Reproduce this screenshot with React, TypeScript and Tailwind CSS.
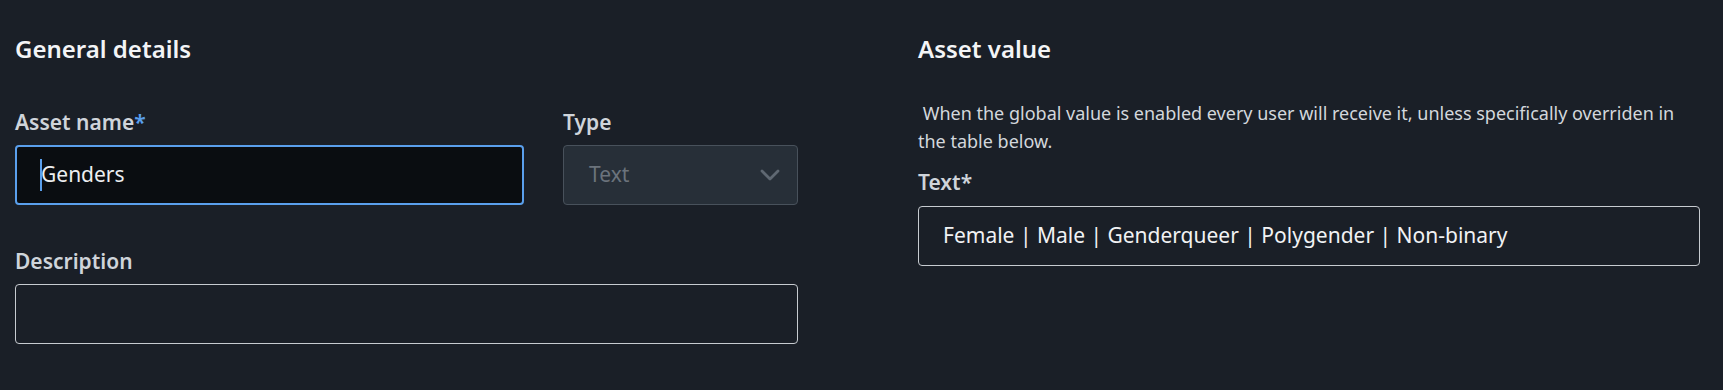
const font = { fontFamily: '"Noto Sans", "Open Sans", sans-serif' };

function Label({ text, required, blue }: { text: string; required?: boolean; blue?: boolean }) {
  return (
    <div className="text-[21px] leading-[28px] font-semibold text-[#cfd4da]">
      {text}
      {required ? <span className={blue ? "text-[#5a9fec]" : "text-[#cfd4da]"}>*</span> : null}
    </div>
  );
}

function Chevron() {
  return (
    <svg width="20" height="12" viewBox="0 0 20 12" fill="none">
      <path d="M2 2l8 8 8-8" stroke="#5f6872" strokeWidth="2.8" strokeLinecap="round" strokeLinejoin="round" />
    </svg>
  );
}

export default function App() {
  return (
    <div style={font} className="min-h-[390px] w-full bg-[#1a1f27] pl-[15px] pt-[33px]">
      <div className="grid grid-cols-[783px_782px] gap-x-[120px]">
        {/* left: general details */}
        <section>
          <h2 className="text-[24px] leading-[32px] font-semibold text-[#f3f4f6]">General details</h2>

          <div className="mt-[43px] flex gap-[39px]">
            <div className="w-[509px]">
              <Label text="Asset name" required blue />
              <div className="mt-[9px] flex h-[60px] items-center rounded-[4px] border-2 border-[#5a9fec] bg-[#0a0d11] pl-[23px] text-[21px] text-[#eceef0]">
                <span className="mr-[-1px] inline-block h-[32px] w-[2px] bg-[#5a9fec]" />
                Genders
              </div>
            </div>
            <div className="w-[235px]">
              <Label text="Type" />
              <div className="mt-[9px] flex h-[60px] items-center justify-between rounded-[4px] border border-[#48515b] bg-[#272f38] pl-[25px] pr-[17px] text-[21px] text-[#6b737c]">
                <span>Text</span>
                <Chevron />
              </div>
            </div>
          </div>

          <div className="mt-[42px]">
            <Label text="Description" />
            <div className="mt-[9px] h-[60px] rounded-[4px] border border-[#c7cbd0] bg-[#1a1f27]" />
          </div>
        </section>

        {/* right: asset value */}
        <section>
          <h2 className="text-[24px] leading-[32px] font-semibold text-[#f3f4f6]">Asset value</h2>
          <p className="mt-[34px] text-[18px] leading-[28px] text-[#d3d7dc]">
            &nbsp;When the global value is enabled every user will receive it, unless specifically overriden in the table below.
          </p>
          <div className="mt-[13px]">
            <Label text="Text" required />
            <div className="mt-[10px] flex h-[60px] items-center rounded-[4px] border border-[#c7cbd0] pl-[24px] text-[21px] text-[#f1f2f4]">
              Female | Male | Genderqueer | Polygender | Non-binary
            </div>
          </div>
        </section>
      </div>
    </div>
  );
}
